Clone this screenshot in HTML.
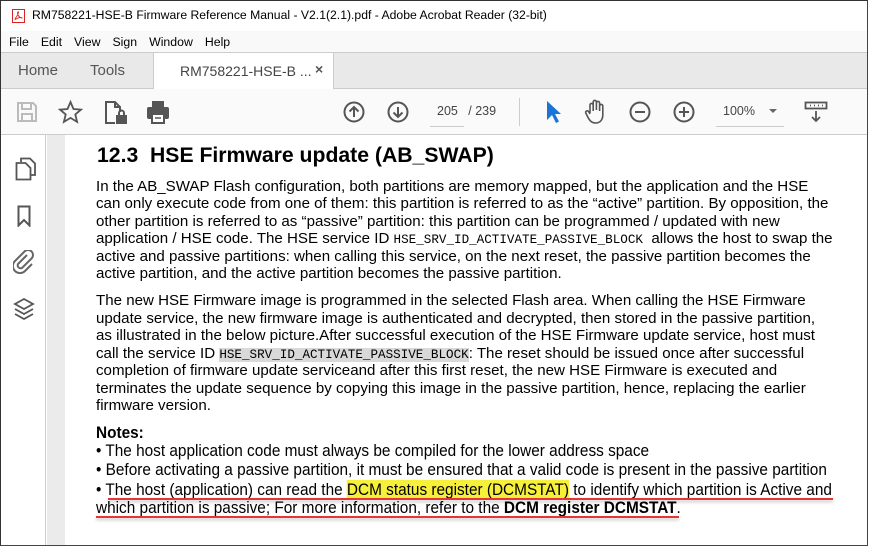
<!DOCTYPE html>
<html><head><meta charset="utf-8"><style>
*{margin:0;padding:0;box-sizing:border-box}
body{width:876px;height:554px;overflow:hidden;background:#fff;font-family:"Liberation Sans",Arial,sans-serif;position:relative}
.abs{position:absolute}
#frame{position:absolute;left:0;top:0;width:868px;height:546px;border-left:1px solid #333;border-top:1px solid #333;border-right:1px solid #444;border-bottom:1px solid #444;overflow:hidden;background:#fff}
.t{position:absolute;white-space:nowrap;font-size:15.1px;color:#000;left:95px}
.m{font-family:"Liberation Mono",monospace;font-size:12.6px}
.n{position:absolute;white-space:nowrap;font-size:16.8px;left:95px;transform-origin:0 0;transform:scaleX(0.915);color:#000}
.menu span{margin-right:12px}
.ic{position:absolute}
</style></head><body>
<div id="frame">
<div class="abs" style="left:0;top:0;width:868px;height:30px;background:#fff"></div>
<svg class="ic" style="left:11px;top:8px" width="13" height="14" viewBox="0 0 13 14"><rect x="0.5" y="0.5" width="12" height="13" fill="#fff" stroke="#d22" /><path d="M3 10 C5 7,7 4,6.5 3 C6 2,5 4,6 6 C7 8,9 9,10 9 C11 9,8 8,6 9 C4 10,3 11,3 10Z" fill="none" stroke="#d22" stroke-width="0.9"/></svg>
<div class="abs" style="left:31px;top:7px;font-size:12.2px;color:#000;white-space:nowrap">RM758221-HSE-B Firmware Reference Manual - V2.1(2.1).pdf - Adobe Acrobat Reader (32-bit)</div>
<div class="abs menu" style="left:0;top:30px;width:868px;height:22px;background:#f9f9f9;font-size:12.3px;padding:4px 0 0 8px;white-space:nowrap"><span>File</span><span>Edit</span><span>View</span><span>Sign</span><span>Window</span><span>Help</span></div>
<div class="abs" style="left:0;top:51px;width:868px;height:37px;background:#e9e9e9;border-top:1px solid #ccc;border-bottom:1px solid #ccc"></div>
<div class="abs" style="left:152px;top:51px;width:181px;height:37px;background:#fff;border-left:1px solid #ccc;border-right:1px solid #ccc;border-top:1px solid #ccc"></div>
<div class="abs" style="left:17px;top:61px;font-size:15px;color:#555">Home</div>
<div class="abs" style="left:89px;top:61px;font-size:15px;color:#555">Tools</div>
<div class="abs" style="left:179px;top:62px;font-size:14px;color:#444;white-space:nowrap">RM758221-HSE-B ...</div>
<div class="abs" style="left:314px;top:60px;font-size:14px;color:#555;font-weight:bold">×</div>
<div class="abs" style="left:0;top:88px;width:868px;height:46px;background:#fafafa;border-bottom:1px solid #ccc"></div>
<svg class="ic" style="left:15px;top:100px" width="22" height="22" viewBox="0 0 22 22" fill="none" stroke="#bbb" stroke-width="2"><path d="M2 2h15l3 3v15H2z"/><path d="M6 2v6h9V2M6 20v-7h10v7"/></svg>
<svg class="ic" style="left:57px;top:99px" width="25" height="24" viewBox="0 0 25 24" fill="none" stroke="#555" stroke-width="1.8"><path d="M12.5 2l3 7 7.5.6-5.7 4.9 1.8 7.4-6.6-4-6.6 4 1.8-7.4L2 9.6l7.5-.6z"/></svg>
<svg class="ic" style="left:103px;top:99px" width="24" height="25" viewBox="0 0 24 25" fill="none" stroke="#555" stroke-width="2"><path d="M11 23H2V2h9l5 5v5"/><path d="M11 2v5h5"/><rect x="13" y="16" width="9" height="7" fill="#555"/><path d="M15 16v-3a2.5 2.5 0 015 0v3"/></svg>
<svg class="ic" style="left:145px;top:99px" width="24" height="24" viewBox="0 0 24 24"><rect x="6" y="1" width="12" height="6" fill="#555"/><rect x="1" y="7" width="22" height="12" rx="2" fill="#555"/><rect x="6" y="14" width="12" height="9" fill="#fff" stroke="#555" stroke-width="2"/><path d="M9 18h6" stroke="#555" stroke-width="1.5"/></svg>
<svg class="ic" style="left:342px;top:100px" width="22" height="22" viewBox="0 0 22 22" fill="none" stroke="#555" stroke-width="2"><circle cx="11" cy="11" r="9.5"/><path d="M11 16V6M6.5 10.5L11 6l4.5 4.5"/></svg>
<svg class="ic" style="left:386px;top:100px" width="22" height="22" viewBox="0 0 22 22" fill="none" stroke="#555" stroke-width="2"><circle cx="11" cy="11" r="9.5"/><path d="M11 6v10M6.5 11.5L11 16l4.5-4.5"/></svg>
<div class="abs" style="left:429px;top:125px;width:34px;border-top:1px solid #ccc"></div>
<div class="abs" style="left:436px;top:103px;font-size:12.5px;color:#444;white-space:nowrap">205 &nbsp;&nbsp;/ 239</div>
<div class="abs" style="left:518px;top:97px;height:28px;border-left:1px solid #ccc"></div>
<svg class="ic" style="left:545px;top:99px" width="16" height="24" viewBox="0 0 16 24"><path d="M1 1v19l5-5 4 8 3-1.5-4-7.5h6z" fill="#1a73d6"/></svg>
<svg class="ic" style="left:583px;top:98px" width="24" height="26" viewBox="0 0 24 26" fill="none" stroke="#555" stroke-width="1.6"><path d="M6 14V6a1.6 1.6 0 013.2 0v6M9.2 11V3a1.6 1.6 0 013.2 0v8M12.4 11V4a1.6 1.6 0 013.2 0v8M15.6 12V7a1.6 1.6 0 013.2 0v9c0 5-3 8-7 8s-6-2-8-6l-2-4a1.6 1.6 0 012.8-1.5L6 15"/></svg>
<svg class="ic" style="left:628px;top:100px" width="22" height="22" viewBox="0 0 22 22" fill="none" stroke="#555" stroke-width="2"><circle cx="11" cy="11" r="9.5"/><path d="M6 11h10"/></svg>
<svg class="ic" style="left:672px;top:100px" width="22" height="22" viewBox="0 0 22 22" fill="none" stroke="#555" stroke-width="2"><circle cx="11" cy="11" r="9.5"/><path d="M6 11h10M11 6v10"/></svg>
<div class="abs" style="left:722px;top:103px;font-size:12.5px;color:#444">100%</div>
<div class="abs" style="left:768px;top:108px;border-left:4px solid transparent;border-right:4px solid transparent;border-top:4px solid #666"></div>
<div class="abs" style="left:715px;top:125px;width:68px;border-top:1px solid #ccc"></div>
<svg class="ic" style="left:803px;top:100px" width="24" height="22" viewBox="0 0 24 22" fill="none" stroke="#555" stroke-width="1.8"><rect x="1.5" y="1.5" width="21" height="6"/><path d="M6 4.5h1M10 4.5h1M14 4.5h1M18 4.5h1" /><path d="M12 10v10M8 16l4 4 4-4"/></svg>
<div class="abs" style="left:0;top:134px;width:45px;height:420px;background:#fff;border-right:1px solid #ccc"></div>
<div class="abs" style="left:46px;top:134px;width:18px;height:420px;background:#ebebeb"></div>
<svg class="ic" style="left:14px;top:156px" width="22" height="24" viewBox="0 0 22 24" fill="none" stroke="#555" stroke-width="1.8"><path d="M6 5V1.5h9l5 5V18h-4"/><path d="M1.5 6h9l5 5v11.5H1.5z"/></svg>
<svg class="ic" style="left:16px;top:204px" width="14" height="22" viewBox="0 0 14 22" fill="none" stroke="#555" stroke-width="2"><path d="M1.5 1.5h11v19L7 15l-5.5 5.5z"/></svg>
<svg class="ic" style="left:12px;top:249px" width="22" height="24" viewBox="0 0 22 24" fill="none" stroke="#666" stroke-width="2"><path d="M14 5L5 14a3 3 0 004 4l10-10a5 5 0 00-7-7L2 11a7 7 0 0010 10l7-7"/></svg>
<svg class="ic" style="left:12px;top:296px" width="22" height="24" viewBox="0 0 22 24" fill="none" stroke="#555" stroke-width="1.8"><path d="M11 2l9 5-9 5-9-5z"/><path d="M2 12l9 5 9-5M2 17l9 5 9-5"/></svg>
<div class="abs" style="left:96px;top:143px;font-size:21.2px;font-weight:bold;white-space:nowrap">12.3&nbsp; HSE Firmware update (AB_SWAP)</div>
<div class="t" style="top:177px">In the AB_SWAP Flash configuration, both partitions are memory mapped, but the application and the HSE</div>
<div class="t" style="top:194px">can only execute code from one of them: this partition is referred to as the “active” partition. By opposition, the</div>
<div class="t" style="top:212px">other partition is referred to as “passive” partition: this partition can be programmed / updated with new</div>
<div class="t" style="top:229px">application / HSE code. The HSE service ID <span class="m">HSE_SRV_ID_ACTIVATE_PASSIVE_BLOCK</span>&nbsp; allows the host to swap the</div>
<div class="t" style="top:247px">active and passive partitions: when calling this service, on the next reset, the passive partition becomes the</div>
<div class="t" style="top:264px">active partition, and the active partition becomes the passive partition.</div>
<div class="t" style="top:291px">The new HSE Firmware image is programmed in the selected Flash area. When calling the HSE Firmware</div>
<div class="t" style="top:309px">update service, the new firmware image is authenticated and decrypted, then stored in the passive partition,</div>
<div class="t" style="top:326px">as illustrated in the below picture.After successful execution of the HSE Firmware update service, host must</div>
<div class="t" style="top:344px">call the service ID <span class="m" style="background:#d9d9d9">HSE_SRV_ID_ACTIVATE_PASSIVE_BLOCK</span>: The reset should be issued once after successful</div>
<div class="t" style="top:361px">completion of firmware update serviceand after this first reset, the new HSE Firmware is executed and</div>
<div class="t" style="top:379px">terminates the update sequence by copying this image in the passive partition, hence, replacing the earlier</div>
<div class="t" style="top:396px">firmware version.</div>
<div class="n" style="top:422px;font-weight:bold">Notes:</div>
<div class="n" style="top:440px">• The host application code must always be compiled for the lower address space</div>
<div class="n" style="top:459px">• Before activating a passive partition, it must be ensured that a valid code is present in the passive partition</div>
<div class="n" style="top:479px">• The host (application) can read the <span style="background:#f7f03a">DCM status register (DCMSTAT)</span> to identify which partition is Active and</div>
<div class="n" style="top:497px">which partition is passive; For more information, refer to the <b>DCM register DCMSTAT</b>.</div>
<div class="abs" style="left:107px;top:497px;width:725px;height:2px;background:#e53535;box-shadow:0 2px 3px rgba(0,0,0,.25)"></div>
<div class="abs" style="left:95px;top:515px;width:583px;height:2px;background:#e53535;box-shadow:0 2px 3px rgba(0,0,0,.25)"></div>
</div>
</body></html>
